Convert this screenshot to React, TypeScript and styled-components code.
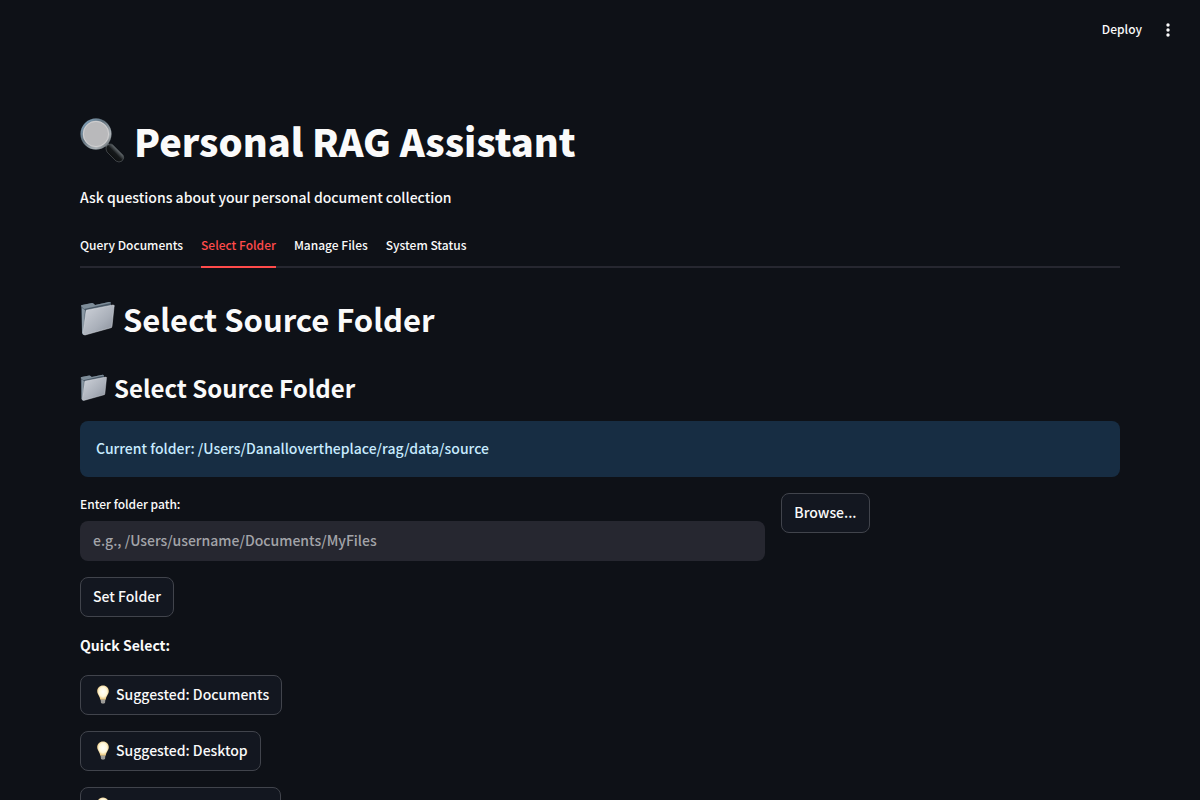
import React from "react";
import styled, { createGlobalStyle } from "styled-components";

const GlobalStyle = createGlobalStyle`
  *, *::before, *::after { box-sizing: border-box; }
  body {
    margin: 0;
    background: #0e1117;
    color: #fafafa;
    color-scheme: dark;
    font-family: "Source Sans Pro", "Noto Sans CJK SC", sans-serif;
    font-size: 14px;
    font-weight: 500;
    line-height: 24px;
    -webkit-font-smoothing: antialiased;
  }
  button, input { font: inherit; color: inherit; }
`;

const Shell = styled.div`
  display: flex;
  flex-direction: column;
  height: 100vh;
  overflow: hidden;
`;

const Toolbar = styled.header`
  display: flex;
  flex: none;
  justify-content: flex-end;
  align-items: center;
  gap: 16px;
  height: 60px;
  padding: 0 22px;
`;

const ToolbarButton = styled.button`
  display: flex;
  align-items: center;
  padding: 0 0 2px;
  border: 0;
  background: none;
  font-size: 12px;
  cursor: pointer;
`;

const MenuButton = styled(ToolbarButton)`
  padding: 0;
`;

const Main = styled.main`
  flex: 1;
  min-height: 0;
  overflow-y: auto;
  scrollbar-width: none;
  padding: 54px 80px 80px;
`;

const Title = styled.h1`
  display: flex;
  align-items: center;
  gap: 8px;
  margin: 0 0 17px;
  font-size: 38px;
  font-weight: 900;
  line-height: 54px;
`;

const Intro = styled.p`
  margin: 0 0 17px;
`;

const Tabs = styled.div`
  display: flex;
  gap: 18px;
  height: 42px;
  border-bottom: 2px solid #262730;
`;

const Tab = styled.button<{ $active?: boolean }>`
  height: 42px;
  padding: 0 0 2px;
  border: 0;
  border-bottom: 2px solid ${(p) => (p.$active ? "#ff4b4b" : "transparent")};
  background: none;
  color: ${(p) => (p.$active ? "#ff4b4b" : "#fafafa")};
  font-size: 12px;
  white-space: nowrap;
  cursor: pointer;
`;

const Heading = styled.h2`
  display: flex;
  align-items: center;
  gap: 7px;
  margin: 29px 0 31px;
  font-size: 31px;
  font-weight: 700;
  line-height: 43px;
`;

const Subheading = styled.h3`
  display: flex;
  align-items: center;
  gap: 6px;
  margin: 0 0 16px;
  font-size: 24px;
  font-weight: 700;
  line-height: 34px;
`;

const Notice = styled.div`
  margin-bottom: 16px;
  padding: 15px 16px 17px;
  border-radius: 8px;
  background: #172d43;
  color: #c7ebff;
`;

const Columns = styled.div`
  display: flex;
  align-items: flex-start;
  gap: 16px;
  margin-bottom: 16px;
`;

const Column = styled.div<{ $share: string }>`
  flex: 1 1 calc(${(p) => p.$share} - 16px);
  min-width: 0;
`;

const Label = styled.label`
  display: block;
  margin-bottom: 6px;
  font-size: 12px;
  line-height: 22px;
`;

const TextInput = styled.input`
  display: block;
  width: 100%;
  height: 40px;
  padding: 0 13px 2px;
  border: 0;
  border-radius: 8px;
  outline: 0;
  background: #262730;
  &::placeholder { color: #a3a4a9; opacity: 1; }
`;

const Button = styled.button`
  display: flex;
  align-items: center;
  height: 40px;
  padding: 0 12px 2px;
  border: 1px solid #41444c;
  border-radius: 8px;
  background: #131720;
  white-space: nowrap;
  cursor: pointer;
`;

const QuickTitle = styled.p`
  margin: 16px 0 18px;
  font-weight: 700;
`;

const QuickList = styled.div`
  display: flex;
  flex-direction: column;
  align-items: flex-start;
  gap: 16px;
`;

const Glyph = styled.svg`
  flex: none;
  display: block;
`;

const Magnifier = () => (
  <Glyph width="46" height="46" viewBox="0 0 46 46" aria-hidden="true">
    <defs>
      <linearGradient id="rim" x1="0" y1="0" x2="1" y2="1">
        <stop offset="0" stopColor="#86a9c4" />
        <stop offset=".4" stopColor="#62727e" />
        <stop offset=".75" stopColor="#aeb4b8" />
        <stop offset="1" stopColor="#4b5156" />
      </linearGradient>
      <linearGradient id="grip" x1="0" y1="1" x2="1" y2="0">
        <stop offset="0" stopColor="#050505" />
        <stop offset=".5" stopColor="#15181a" />
        <stop offset=".65" stopColor="#5a6064" />
        <stop offset=".8" stopColor="#151617" />
      </linearGradient>
    </defs>
    <path d="M26 26l4 4" stroke="#a4abaf" strokeWidth="4" />
    <path d="M26 30q0-3 4-4 2 0 3 1l10 10q2 3-1 6-3 2-6 0L27 34q-1-2-1-4z" fill="url(#grip)" stroke="#484c50" strokeWidth=".8" />
    <circle cx="16" cy="16" r="15.7" fill="#343c43" />
    <circle cx="16" cy="16" r="14.3" fill="#b9b9bb" stroke="url(#rim)" strokeWidth="2.2" />
    <circle cx="16" cy="16" r="12.6" fill="none" stroke="#d4d4d5" strokeWidth=".8" />
  </Glyph>
);

const Folder = ({ size }: { size: number }) => (
  <Glyph width={size} height={size} viewBox="0 0 36 36" aria-hidden="true">
    <defs>
      <linearGradient id={`front${size}`} x1="0" y1="0" x2="1" y2="1">
        <stop offset="0" stopColor="#d0d4db" />
        <stop offset=".6" stopColor="#a9afb9" />
        <stop offset="1" stopColor="#858c97" />
      </linearGradient>
    </defs>
    <path d="M1 5q0-1 1-1l10-2q1 0 2 1l1 1 14-3q2 0 2 2v22L4 34q-2 0-2-2z" fill="#485765" />
    <path d="M1 5q0-1 1-1l10-2q1 0 2 1l1 1 14-3q2 0 2 1L4 8z" fill="#7e8d99" />
    <path d="M2 7l3 2-2 24-1-1z" fill="#8a98a4" />
    <path d="M6 10q0-1 1-1l26-5q2 0 1 2l-2 19q0 2-2 2L5 34q-2 0-2-2z" fill={`url(#front${size})`} stroke="#dfe3e8" strokeWidth=".5" />
  </Glyph>
);

const Bulb = () => (
  <Glyph width="20" height="20" viewBox="0 -1 20 20" aria-hidden="true">
    <defs>
      <radialGradient id="bulb" cx=".5" cy=".45" r=".55">
        <stop offset="0" stopColor="#fffffb" />
        <stop offset=".6" stopColor="#fff8dc" />
        <stop offset="1" stopColor="#e9c477" />
      </radialGradient>
    </defs>
    <path d="M7.500 14h5l-.5 4q-2 1.500-4 0z" fill="#8c8b88" />
    <path d="M8 15.300h4M8 17h4" stroke="#bdbcb6" strokeWidth=".6" />
    <path d="M10 .6c3.500 0 5.800 2.500 5.800 5.500 0 3.300-2.500 4.600-3 8.400H7.200c-.5-3.800-3-5.100-3-8.400C4.200 3.100 6.500.6 10 .6z" fill="url(#bulb)" />
  </Glyph>
);

const Suggestion = styled(Button)`
  gap: 3px;
`;

const tabs = ["Query Documents", "Select Folder", "Manage Files", "System Status"];
const suggestions = ["Documents", "Desktop", "Downloads"];

export default function App() {
  return (
    <Shell>
      <GlobalStyle />
      <Toolbar>
        <ToolbarButton>Deploy</ToolbarButton>
        <MenuButton aria-label="Main menu">
          <Glyph width="20" height="20" viewBox="0 0 20 20" fill="#fafafa">
            <circle cx="10" cy="5" r="1.700" />
            <circle cx="10" cy="10" r="1.700" />
            <circle cx="10" cy="15" r="1.700" />
          </Glyph>
        </MenuButton>
      </Toolbar>
      <Main>
        <Title><Magnifier />Personal RAG Assistant</Title>
        <Intro>Ask questions about your personal document collection</Intro>
        <Tabs role="tablist">
          {tabs.map((name) => (
            <Tab key={name} role="tab" aria-selected={name === "Select Folder"} $active={name === "Select Folder"}>
              {name}
            </Tab>
          ))}
        </Tabs>
        <Heading><Folder size={36} />Select Source Folder</Heading>
        <Subheading><Folder size={28} />Select Source Folder</Subheading>
        <Notice>Current folder: /Users/Danallovertheplace/rag/data/source</Notice>
        <Columns>
          <Column $share="66.6667%">
            <Label htmlFor="folder-path">Enter folder path:</Label>
            <TextInput id="folder-path" type="text" placeholder="e.g., /Users/username/Documents/MyFiles" />
          </Column>
          <Column $share="33.3333%">
            <Button>Browse...</Button>
          </Column>
        </Columns>
        <Button>Set Folder</Button>
        <QuickTitle>Quick Select:</QuickTitle>
        <QuickList>
          {suggestions.map((name) => (
            <Suggestion key={name}><Bulb />Suggested: {name}</Suggestion>
          ))}
        </QuickList>
      </Main>
    </Shell>
  );
}
